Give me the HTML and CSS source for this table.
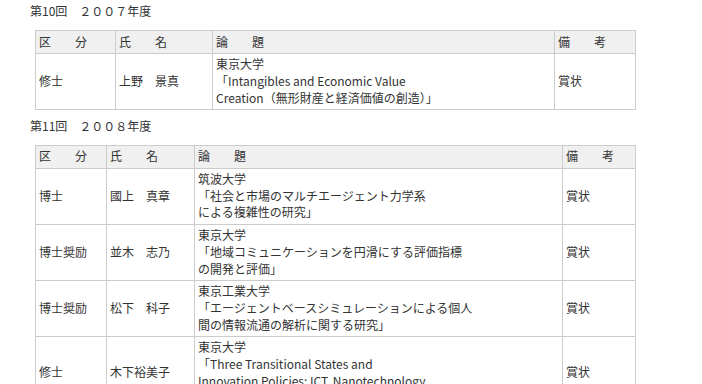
FILE: index.html
```html
<!DOCTYPE html>
<html lang="ja">
<head>
<meta charset="utf-8">
<link rel="stylesheet" href="styles.css">
</head>
<body>
<div class="page">
  <p class="round">第10回　２００７年度</p>
  <table class="award t1">
    <colgroup>
      <col class="c-kind"><col class="c-name"><col class="c-title"><col class="c-note">
    </colgroup>
    <tr><th>区　　分</th><th>氏　　名</th><th>論　　題</th><th>備　　考</th></tr>
    <tr>
      <td>修士</td>
      <td>上野　景真</td>
      <td>東京大学<br>「Intangibles and Economic Value<br>Creation（無形財産と経済価値の創造）」</td>
      <td>賞状</td>
    </tr>
  </table>

  <p class="round">第11回　２００８年度</p>
  <table class="award t2">
    <colgroup>
      <col class="c-kind"><col class="c-name"><col class="c-title"><col class="c-note">
    </colgroup>
    <tr><th>区　　分</th><th>氏　　名</th><th>論　　題</th><th>備　　考</th></tr>
    <tr>
      <td>博士</td>
      <td>國上　真章</td>
      <td>筑波大学<br>「社会と市場のマルチエージェント力学系<br>による複雑性の研究」</td>
      <td>賞状</td>
    </tr>
    <tr>
      <td>博士奨励</td>
      <td>並木　志乃</td>
      <td>東京大学<br>「地域コミュニケーションを円滑にする評価指標<br>の開発と評価」</td>
      <td>賞状</td>
    </tr>
    <tr>
      <td>博士奨励</td>
      <td>松下　科子</td>
      <td>東京工業大学<br>「エージェントベースシミュレーションによる個人<br>間の情報流通の解析に関する研究」</td>
      <td>賞状</td>
    </tr>
    <tr>
      <td>修士</td>
      <td>木下裕美子</td>
      <td>東京大学<br>「Three Transitional States and<br>Innovation Policies: ICT, Nanotechnology<br>and Biotechnology」</td>
      <td>賞状</td>
    </tr>
  </table>
</div>
</body>
</html>
```

FILE: styles.css
```css
html, body {
  margin: 0;
  padding: 0;
  background: #ffffff;
}
body {
  font-family: "Noto Sans CJK JP", "Noto Sans", sans-serif;
  font-size: 12px;
  color: #333333;
}
.page {
  padding: 2px 0 0 30px;
}
.round {
  margin: 0 0 11px 0;
  line-height: 17px;
}
.award {
  border-collapse: collapse;
  table-layout: fixed;
  width: 600px;
  margin: 0 0 7px 5px;
}
.award th,
.award td {
  border: 1px solid #cccccc;
  line-height: 16.7px;
  text-align: left;
  font-weight: normal;
  vertical-align: middle;
  padding: 2.5px 3px;
}
.award th {
  background: #f0f0f0;
  padding: 2.5px 3px;
}
.t1 .c-kind { width: 80px; }
.t1 .c-name { width: 97px; }
.t1 .c-title { width: 342px; }
.t1 .c-note { width: 81px; }
.t2 .c-kind { width: 71px; }
.t2 .c-name { width: 88px; }
.t2 .c-title { width: 368px; }
.t2 .c-note { width: 73px; }
```
